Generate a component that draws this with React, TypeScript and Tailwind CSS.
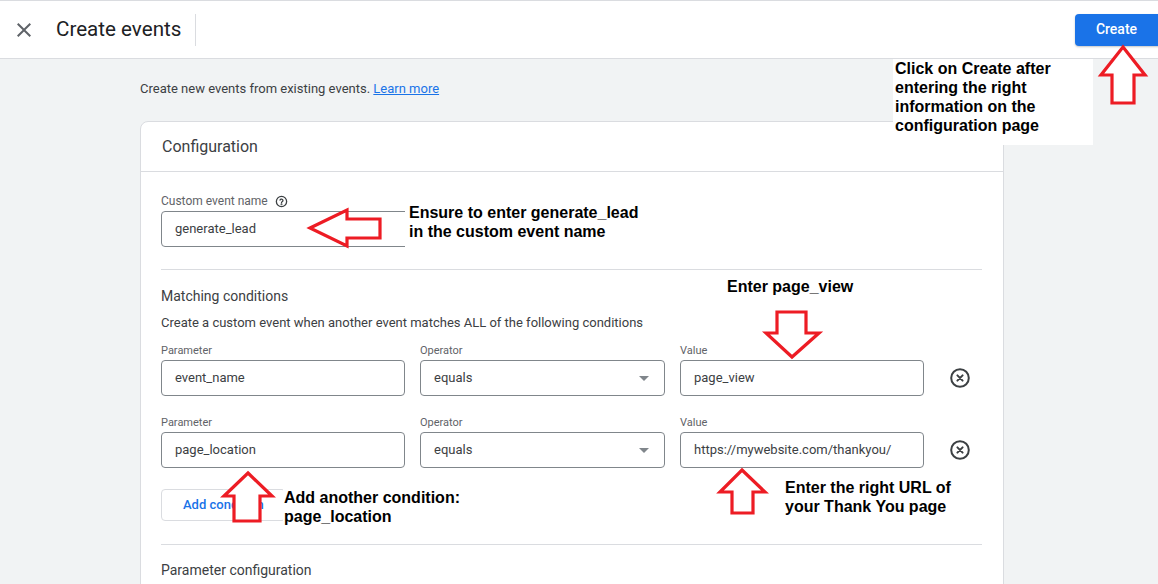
import { JSX } from "react"

const CloseIcon = (): JSX.Element => (
    <svg width="24" height="24" viewBox="0 0 24 24" fill="currentColor">
        <path d="M19 6.41L17.59 5 12 10.59 6.41 5 5 6.41 10.59 12 5 17.59 6.41 19 12 13.41 17.59 19 19 17.59 13.41 12z" />
    </svg>
)

const HelpIcon = (): JSX.Element => (
    <svg width="13" height="13" viewBox="0 0 24 24" fill="none" stroke="#3c4043" strokeWidth="2.4" strokeLinecap="round">
        <circle cx="12" cy="12" r="9.5" />
        <path d="M9.3 9.3a2.8 2.8 0 0 1 5.4 1c0 1.9-2.7 2.4-2.7 3.6" />
        <circle cx="12" cy="17.2" r="0.6" fill="#3c4043" />
    </svg>
)

const RemoveIcon = (): JSX.Element => (
    <svg width="24" height="24" viewBox="0 0 24 24" fill="none" stroke="#3c4043" strokeWidth="2">
        <circle cx="12" cy="12" r="8.8" />
        <path d="M9.4 9.4l5.2 5.2M14.6 9.4l-5.2 5.2" strokeWidth="2" strokeLinecap="round" />
    </svg>
)

const Caret = (): JSX.Element => (
    <svg width="24" height="24" viewBox="0 0 24 24" fill="#80868b">
        <path d="M7 10l5 5 5-5z" />
    </svg>
)

const Field = ({ label, value, select }: { label: string; value: string; select?: boolean }): JSX.Element => (
    <div className="flex flex-col">
        <span className="text-[11px] leading-[14px] text-[#5f6368]">{label}</span>
        <div className="mt-[2px] flex h-[36px] items-center rounded-[4px] border border-[#80868b] pl-[13px] pr-[8px] text-[13px] text-[#3c4043]">
            <span className="grow">{value}</span>
            {select && <Caret />}
        </div>
    </div>
)

const ConditionRow = ({ param, value, className }: { param: string; value: string; className?: string }): JSX.Element => (
    <div className={`flex items-end ${className ?? ""}`}>
        <div className="w-[244px]"><Field label="Parameter" value={param} /></div>
        <div className="ml-[15px] w-[245px]"><Field label="Operator" value="equals" select /></div>
        <div className="ml-[15px] w-[244px]"><Field label="Value" value={value} /></div>
        <div className="ml-[24px] flex h-[36px] items-center"><RemoveIcon /></div>
    </div>
)

// red hollow arrows pointing at the fields
const Arrows = (): JSX.Element => (
    <svg className="pointer-events-none absolute left-0 top-0" width="1158" height="584" fill="#ffffff" stroke="#ed1c24" strokeWidth="3.2">
        <polygon points="1123,47 1145,75 1134,75 1134,103 1112,103 1112,75 1101,75" />
        <polygon points="310,228 347,210 347,219 380,219 380,238 347,238 347,246" />
        <polygon points="777,312 806,312 806,333 819,333 792,357 766,333 777,333" />
        <polygon points="742,470 765,492 753,492 753,513 732,513 732,492 720,492" />
        <polygon points="248,473 272,496 260,496 260,521 234,521 234,496 224,496" />
    </svg>
)

const note = "absolute bg-white font-['Liberation_Sans',Arial,sans-serif] text-[16px] font-bold leading-[19px] text-black"

export default function App(): JSX.Element {
    return (
        <div className="relative h-[584px] w-[1158px] overflow-hidden bg-[#f1f3f4] font-['Roboto',sans-serif]">
            <header className="flex h-[59px] items-center border-y border-[#dadce0] bg-white">
                <button className="ml-[12px] text-[#5f6368]"><CloseIcon /></button>
                <h1 className="ml-[20px] text-[20.6px] text-[#202124]">Create events</h1>
                <div className="ml-[14px] h-[32px] w-px bg-[#dadce0]" />
                <button className="ml-auto mr-[-5px] h-[32px] w-[88px] rounded-[4px] bg-[#1a73e8] pr-[5px] text-[14px] font-medium text-white shadow-[0_1px_2px_rgba(60,64,67,0.3)]">
                    Create
                </button>
            </header>

            <main className="pl-[140px] pt-[20px]">
                <p className="text-[13px] leading-[20px] text-[#3c4043]">
                    Create new events from existing events. <a href="#" className="text-[#1a73e8] underline">Learn more</a>
                </p>

                <section className="mt-[22px] w-[864px] rounded-t-[8px] border border-[#dadce0] bg-white">
                    <div className="flex h-[50px] items-center border-b border-[#dadce0] px-[21px] text-[16px] text-[#3c4043]">
                        Configuration
                    </div>

                    <div className="pl-[20px] pr-[21px] pt-[21px]">
                        <div className="flex items-center gap-[7px] text-[12px] leading-[16px] text-[#5f6368]">
                            Custom event name <HelpIcon />
                        </div>
                        <div className="mt-[2px] flex h-[36px] w-[248px] items-center rounded-[4px] border border-[#80868b] pl-[13px] text-[13px] text-[#3c4043]">
                            generate_lead
                        </div>

                        <div className="mt-[22px] border-t border-[#dadce0]" />

                        <h2 className="mt-[16px] text-[14px] leading-[20px] text-[#3c4043]">Matching conditions</h2>
                        <p className="mt-[8px] text-[13px] leading-[18px] text-[#3c4043]">
                            Create a custom event when another event matches ALL of the following conditions
                        </p>

                        <ConditionRow className="mt-[12px]" param="event_name" value="page_view" />
                        <ConditionRow className="mt-[20px]" param="page_location" value="https://mywebsite.com/thankyou/" />

                        <button className="mt-[21px] h-[32px] rounded-[4px] border border-[#dadce0] px-[21px] text-[13px] font-medium text-[#1a73e8]">
                            Add condition
                        </button>

                        <div className="mt-[23px] border-t border-[#dadce0]" />

                        <h2 className="mt-[15px] pb-[40px] text-[14px] leading-[20px] text-[#3c4043]">Parameter configuration</h2>
                    </div>
                </section>
            </main>

            <div className={`${note} left-[893px] top-[59px] h-[86px] w-[200px] pl-[2px]`}>
                Click on Create after<br />entering the right<br />information on the<br />configuration page
            </div>
            <div className={`${note} left-[405px] top-[203px] h-[47px] w-[244px] pl-[4px]`}>
                Ensure to enter generate_lead<br />in the custom event name
            </div>
            <div className={`${note} left-[727px] top-[277px]`}>Enter page_view</div>
            <div className={`${note} left-[283px] top-[488px] w-[190px] pl-[1px]`}>
                Add another condition:<br />page_location
            </div>
            <div className={`${note} left-[785px] top-[478px]`}>
                Enter the right URL of<br />your Thank You page
            </div>

            <Arrows />
        </div>
    )
}
